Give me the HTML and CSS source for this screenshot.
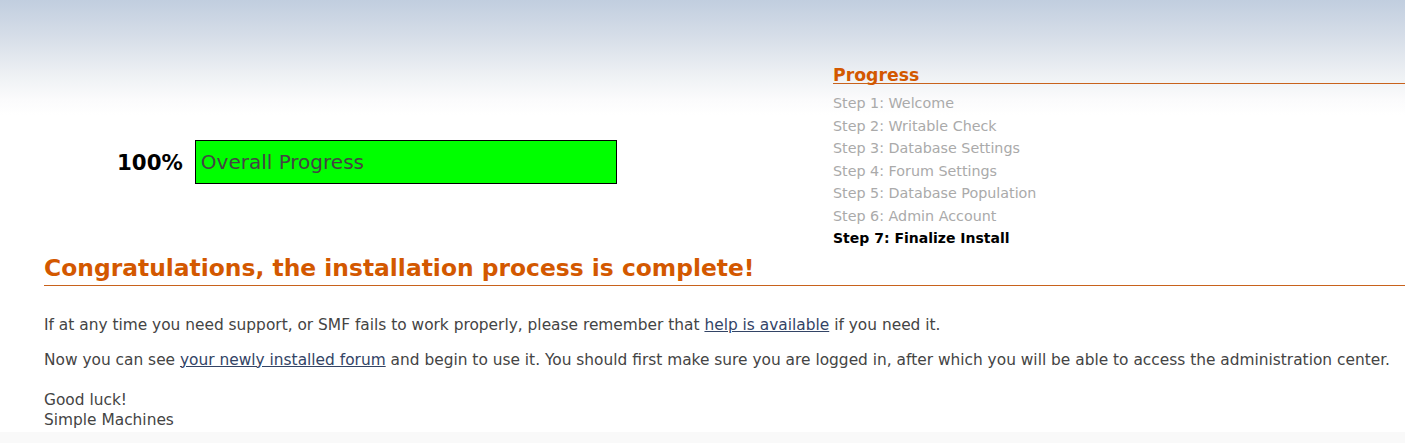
FILE: index.html
```html
<!DOCTYPE html>
<html lang="en">
<head>
<meta charset="utf-8">
<title>SMF Installer</title>
<link rel="stylesheet" href="styles.css">
</head>
<body>
<div class="page">
  <div class="top">
    <div class="overall">
      <span class="percent">100%</span>
      <div class="bar"><span class="bar-text">Overall Progress</span></div>
    </div>
    <div class="steps">
      <h2 class="steps-title">Progress</h2>
      <ul class="step-list">
        <li>Step 1: Welcome</li>
        <li>Step 2: Writable Check</li>
        <li>Step 3: Database Settings</li>
        <li>Step 4: Forum Settings</li>
        <li>Step 5: Database Population</li>
        <li>Step 6: Admin Account</li>
        <li class="current">Step 7: Finalize Install</li>
      </ul>
    </div>
  </div>
  <div class="main">
    <h2 class="main-title">Congratulations, the installation process is complete!</h2>
    <p class="para">If at any time you need support, or SMF fails to work properly, please remember that <a href="#">help is available</a> if you need it.</p>
    <p class="para">Now you can see <a href="#">your newly installed forum</a> and begin to use it. You should first make sure you are logged in, after which you will be able to access the administration center.</p>
    <p class="para sign">Good luck!<br>Simple Machines</p>
  </div>
  <div class="footer"></div>
</div>
</body>
</html>
```
FILE: styles.css
```css
html, body {
  margin: 0;
  padding: 0;
}
body {
  font-family: "DejaVu Sans", Verdana, sans-serif;
  color: #444;
  background: #fff;
}
.page {
  min-height: 443px;
  background: linear-gradient(to bottom, #c1cedf 0px, #d8dfe9 40px, #eef1f4 75px, #fbfbfc 100px, #ffffff 115px);
  display: flex;
  flex-direction: column;
}
.top {
  display: flex;
  align-items: flex-start;
}
.overall {
  display: flex;
  align-items: center;
  gap: 12px;
  margin-left: 117px;
  margin-top: 140px;
}
.percent {
  font-weight: bold;
  font-size: 21.3px;
  color: #000;
}
.bar {
  width: 415px;
  height: 42px;
  border: 1px solid #000;
  background: #00ff00;
  display: flex;
  align-items: center;
  padding-left: 5px;
}
.bar-text {
  font-size: 20px;
  color: #444;
}
.steps {
  margin-left: auto;
  width: 572px;
  padding-top: 67px;
}
.steps-title {
  margin: 0;
  font-size: 17.3px;
  line-height: 16px;
  color: #d35800;
  border-bottom: 1px solid #c8621c;
}
.step-list {
  list-style: none;
  margin: 8px 0 0;
  padding: 0;
}
.step-list li {
  font-size: 14.3px;
  line-height: 22.5px;
  color: #aaa;
}
.step-list li.current {
  color: #000;
  font-weight: bold;
  font-size: 14px;
}
.main {
  padding-left: 44px;
}
.main-title {
  margin: 5px 0 0;
  padding-bottom: 4px;
  font-size: 23.4px;
  line-height: 26px;
  color: #d35800;
  border-bottom: 1px solid #c8621c;
}
.para {
  margin: 29px 0 0;
  font-size: 15.4px;
  line-height: 20px;
}
.para + .para {
  margin-top: 15px;
}
.para.sign {
  margin-top: 20px;
}
.para a {
  color: #334466;
  text-decoration: underline;
}
.footer {
  margin-top: auto;
  height: 11px;
  background: #f9f9f9;
}
```
